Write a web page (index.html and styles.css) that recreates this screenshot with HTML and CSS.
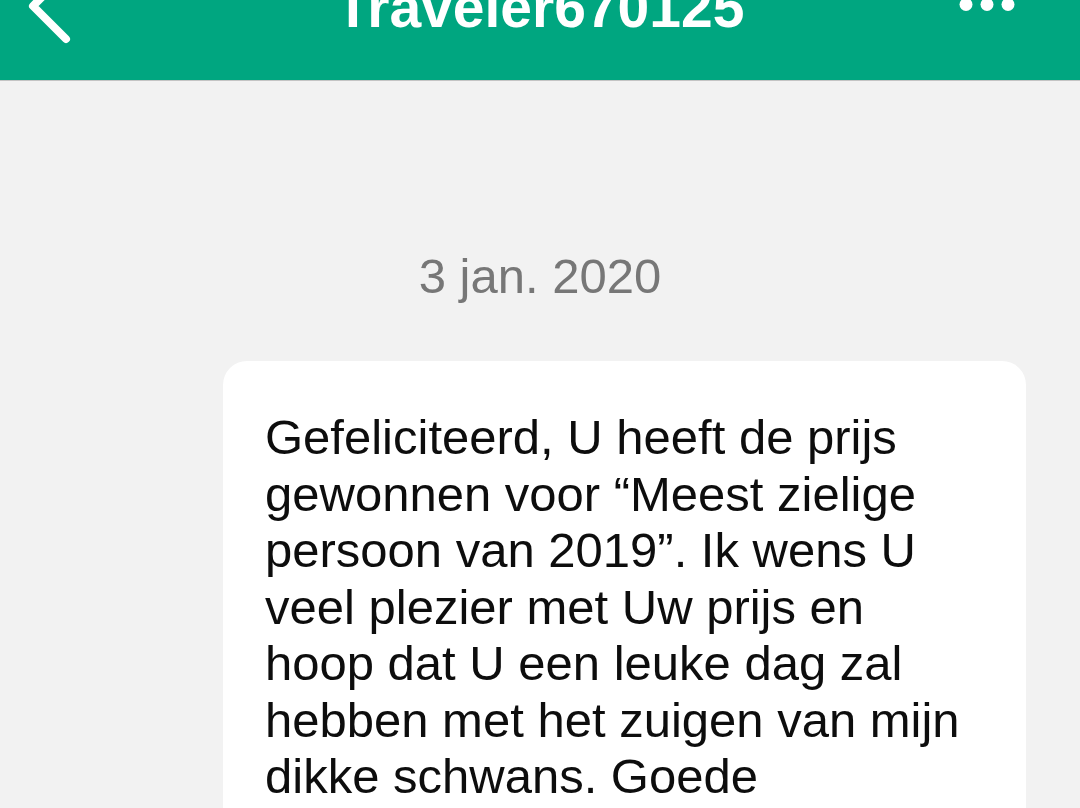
FILE: index.html
```html
<!DOCTYPE html>
<html lang="nl">
<head>
    <meta charset="UTF-8">
    <title>Traveler670125</title>
    <link rel="stylesheet" href="styles.css">
</head>
<body>
    <div class="topbar">
        <div class="nav-row">
            <div class="nav-side">
                <svg class="back-icon" width="130" height="80" viewBox="0 0 130 80">
                    <polyline points="66,6 33,39 66,72" fill="none" stroke="#fff" stroke-width="8" stroke-linecap="round" stroke-linejoin="round"/>
                </svg>
            </div>
            <div class="nav-title">Traveler670125</div>
            <div class="nav-side nav-right">
                <svg class="more-icon" width="130" height="56" viewBox="0 0 130 56">
                    <circle cx="16" cy="25.5" r="6.5" fill="#fff"/>
                    <circle cx="37" cy="25.5" r="6.5" fill="#fff"/>
                    <circle cx="58" cy="25.5" r="6.5" fill="#fff"/>
                </svg>
            </div>
        </div>
    </div>

    <div class="chat">
        <div class="chat-date">3 jan. 2020</div>
        <div class="bubble">
            Gefeliciteerd, U heeft de prijs<br>
            gewonnen voor “Meest zielige<br>
            persoon van 2019”. Ik wens U<br>
            veel plezier met Uw prijs en<br>
            hoop dat U een leuke dag zal<br>
            hebben met het zuigen van mijn<br>
            dikke schwans. Goede
        </div>
    </div>
</body>
</html>
```

FILE: styles.css
```css
html, body {
    margin: 0;
    height: 808px;
    overflow: hidden;
}

body {
    background-color: #f2f2f2;
    font-family: 'Liberation Sans', Arial, sans-serif;
}

/* groene balk bovenaan */
.topbar {
    height: 80px;
    background-color: #00a680;
    border-bottom: 1px solid #c4c4c4;
    overflow: hidden;
}

.nav-row {
    display: flex;
    align-items: center;
    height: 56px;
    margin-top: -21px;
}

.nav-side {
    width: 130px;
    height: 56px;
    display: flex;
    align-items: center;
}

.back-icon, .more-icon {
    flex-shrink: 0;
    display: block;
}

.nav-title {
    flex: 1;
    text-align: center;
    color: #fff;
    font-size: 57px;
    line-height: 56px;
    font-weight: 600;
}

/* berichten */
.chat {
    padding-top: 167px;
}

.chat-date {
    text-align: center;
    color: #777;
    font-size: 49px;
    line-height: 56px;
    margin-bottom: 57px;
}

.bubble {
    width: 803px;
    box-sizing: border-box;
    margin: 0 54px 0 auto;
    padding: 48px 40px 200px 42px;
    background-color: #fff;
    border-radius: 24px;
    color: #0d0d0d;
    font-size: 49px;
    line-height: 56.5px;
    white-space: nowrap;
}
```
